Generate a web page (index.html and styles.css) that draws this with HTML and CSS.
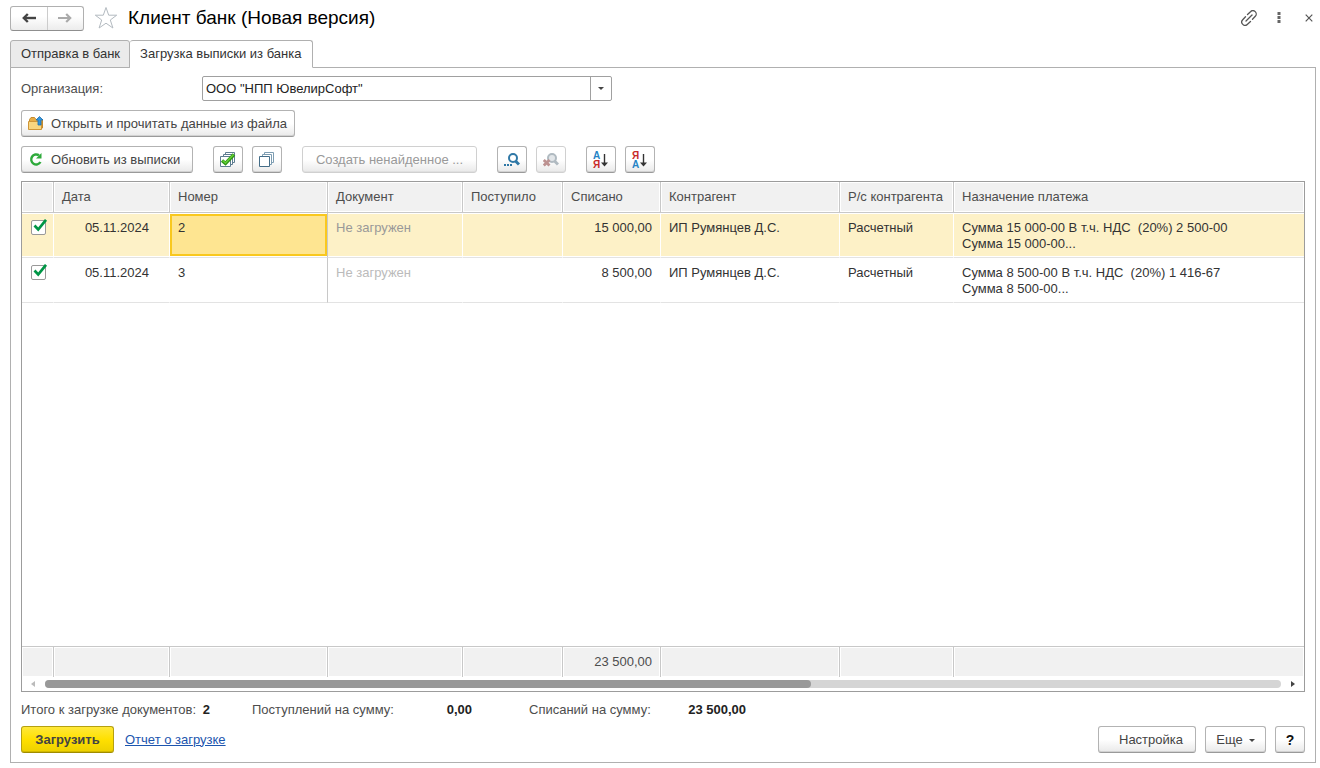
FILE: index.html
```html
<!DOCTYPE html>
<html lang="ru">
<head>
<meta charset="utf-8">
<title>Клиент банк (Новая версия)</title>
<link rel="stylesheet" href="styles.css">
</head>
<body>
<header class="titlebar">
  <div class="nav">
    <button class="nav-btn" type="button" aria-label="Назад"><svg width="14" height="10" viewBox="0 0 14 10"><path d="M2 5H14" stroke="#444" stroke-width="2.400"/><path d="M5.800 1L1.800 5L5.800 9" fill="none" stroke="#444" stroke-width="2.400"/></svg></button>
    <button class="nav-btn" type="button" aria-label="Вперед"><svg width="14" height="10" viewBox="0 0 14 10"><path d="M0 5H12" stroke="#aaa" stroke-width="2"/><path d="M8.200 1L12.200 5L8.200 9" fill="none" stroke="#aaa" stroke-width="2.200"/></svg></button>
  </div>
  <button class="plain" type="button" aria-label="В избранное"><svg width="24" height="24" viewBox="0 0 24 24"><path d="M12 1.500L14.700 9.200H22.700L16.300 14L18.900 22L12 17.200L5.100 22L7.700 14L1.300 9.200H9.300Z" fill="#fff" stroke="#b3bac0"/></svg></button>
  <h1>Клиент банк (Новая версия)</h1>
  <div class="window-tools">
    <button class="plain" type="button" aria-label="Ссылка"><svg width="16" height="16" viewBox="0 0 16 16"><g fill="none" stroke="#555" stroke-width="1.300" stroke-linecap="round"><path d="M6.500 4.500L9.500 1.700A3.200 3.200 0 0 1 14.300 6.300L11.500 9.200"/><path d="M9.500 11.500L6.500 14.300A3.200 3.200 0 0 1 1.700 9.700L4.500 6.800"/><path d="M5 11L11 5"/></g></svg></button>
    <button class="plain" type="button" aria-label="Меню"><svg width="4" height="12" viewBox="0 0 4 12"><path d="M.5 0h3v3h-3zM.5 4h3v3h-3zM.5 8h3v3h-3z" fill="#666"/></svg></button>
    <button class="plain" type="button" aria-label="Закрыть"><svg width="8" height="8" viewBox="0 0 8 8"><path d="M.7.7L7.300 7.300M7.300.7L.7 7.300" stroke="#555" stroke-width="1.200"/></svg></button>
  </div>
</header>

<nav class="tabs" role="tablist">
  <button class="tab" type="button" role="tab" aria-selected="false">Отправка в банк</button>
  <button class="tab active" type="button" role="tab" aria-selected="true">Загрузка выписки из банка</button>
</nav>

<main class="panel">
  <div class="field">
    <label for="org">Организация:</label>
    <div class="combo">
      <select id="org"><option>ООО "НПП ЮвелирСофт"</option></select>
      <span class="combo-arrow"><svg width="6" height="3" viewBox="0 0 6 3"><path d="M0 0H6L3 3Z" fill="#444"/></svg></span>
    </div>
  </div>

  <div class="toolbar">
    <button class="btn with-icon open" type="button"><svg width="17" height="16" viewBox="0 0 17 16"><path d="M1.500 12V3.500L3 1.500H6.500L8 3.500H14.500V12Z" fill="#e8ad45" stroke="#c68a2c"/><path d="M.5 13.500V5.500H13.500V13.500Z" fill="#f8d680" stroke="#cf9638"/><path d="M11.500 .5L15 4H13V9H10V4H8Z" fill="#3195dc" stroke="#1d6dac" stroke-width=".8"/></svg>Открыть и прочитать данные из файла</button>
  </div>

  <div class="toolbar">
    <button class="btn with-icon refresh" type="button"><svg width="17" height="16" viewBox="0 0 17 16"><path d="M12.500 10A5 5 0 1 1 11 3.300" fill="none" stroke="#2eaa3b" stroke-width="2.400"/><path d="M13.500 1V6.500H8Z" fill="#2eaa3b"/></svg>Обновить из выписки</button>
    <div class="group">
      <button class="btn icon" type="button" aria-label="Отметить все"><svg width="16" height="16" viewBox="0 0 16 16"><g fill="#fff" stroke="#5e7d91"><path d="M5.500.5h9v10h-9z"/><path d="M3.500 2.500h9v10h-9z"/><path d="M.5 4.500h10v10h-10z"/></g><path d="M2 8.500L5.500 11.500L14 2.500" fill="none" stroke="#2d9416" stroke-width="3.400"/><path d="M2.500 8.500L5.500 11L13.500 2.500" fill="none" stroke="#64cf35" stroke-width="1.600"/></svg></button>
      <button class="btn icon" type="button" aria-label="Снять отметки"><svg width="16" height="16" viewBox="0 0 16 16"><g fill="#fff" stroke="#7d9db2"><path d="M5.500.5h9v10h-9z"/><path d="M3.500 2.500h9v10h-9z"/><path d="M.5 4.500h10v10h-10z" stroke="#456d88"/></g></svg></button>
    </div>
    <button class="btn create" type="button" disabled>Создать ненайденное ...</button>
    <div class="group">
      <button class="btn icon" type="button" aria-label="Найти"><svg width="16" height="16" viewBox="0 0 16 16"><circle cx="9" cy="6" r="4" fill="none" stroke="#2f78a6" stroke-width="2"/><path d="M11.500 9L15 12.500" stroke="#2f78a6" stroke-width="3"/><path d="M0 12h2v2H0zM3 12h2v2H3zM6 12h2v2H6z" fill="#2f78a6"/></svg></button>
      <button class="btn icon" type="button" disabled aria-label="Отменить поиск"><svg width="16" height="16" viewBox="0 0 16 16"><circle cx="9" cy="6" r="4" fill="#e2e6e9" stroke="#b0bac1" stroke-width="2"/><path d="M11.500 9L15 12.500" stroke="#b0bac1" stroke-width="3"/><path d="M.8 8L6.500 13.500M6.500 8L.8 13.500" stroke="#bd9291" stroke-width="2.800"/></svg></button>
    </div>
    <div class="group">
      <button class="btn icon" type="button" aria-label="По возрастанию"><svg class="sort" width="16" height="18" viewBox="0 0 16 18"><text x="0" y="8" fill="#2684c6">А</text><text x="0" y="17" fill="#c82a2a">Я</text><path d="M11.500 3V14" stroke="#333" stroke-width="1.400"/><path d="M8 11.500H15L11.500 15.500Z" fill="#333"/></svg></button>
      <button class="btn icon" type="button" aria-label="По убыванию"><svg class="sort" width="16" height="18" viewBox="0 0 16 18"><text x="0" y="8" fill="#c82a2a">Я</text><text x="0" y="17" fill="#2684c6">А</text><path d="M11.500 3V14" stroke="#333" stroke-width="1.400"/><path d="M8 11.500H15L11.500 15.500Z" fill="#333"/></svg></button>
    </div>
  </div>

  <section class="grid">
    <div class="grid-body">
      <table>
        <colgroup><col class="c-check"><col class="c-date"><col class="c-num"><col class="c-doc"><col class="c-in"><col class="c-out"><col class="c-party"><col class="c-acc"><col></colgroup>
        <thead><tr><th></th><th>Дата</th><th>Номер</th><th>Документ</th><th>Поступило</th><th>Списано</th><th>Контрагент</th><th>Р/с контрагента</th><th>Назначение платежа</th></tr></thead>
        <tbody>
          <tr class="row selected"><td class="check"><input type="checkbox" checked aria-label="Загружать документ 2"></td><td class="date">05.11.2024</td><td class="num current">2</td><td class="muted">Не загружен</td><td></td><td class="sum">15 000,00</td><td>ИП Румянцев Д.С.</td><td>Расчетный</td><td class="purpose">Сумма 15 000-00 В т.ч. НДС  (20%) 2 500-00
Сумма 15 000-00...</td></tr>
          <tr class="row"><td class="check"><input type="checkbox" checked aria-label="Загружать документ 3"></td><td class="date">05.11.2024</td><td class="num">3</td><td class="muted">Не загружен</td><td></td><td class="sum">8 500,00</td><td>ИП Румянцев Д.С.</td><td>Расчетный</td><td class="purpose">Сумма 8 500-00 В т.ч. НДС  (20%) 1 416-67
Сумма 8 500-00...</td></tr>
          <tr class="filler"><td colspan="9"></td></tr>
        </tbody>
        <tfoot><tr><td></td><td></td><td></td><td></td><td></td><td class="sum">23 500,00</td><td></td><td></td><td></td></tr></tfoot>
      </table>
    </div>
    <div class="scroll">
      <svg width="4" height="6" viewBox="0 0 4 6"><path d="M4 0V6L0 3Z" fill="#bbb"/></svg>
      <div class="track"><div class="thumb"></div></div>
      <svg width="4" height="6" viewBox="0 0 4 6"><path d="M0 0V6L4 3Z" fill="#444"/></svg>
    </div>
  </section>

  <div class="totals">
    <div class="total docs"><span>Итого к загрузке документов:</span><b>2</b></div>
    <div class="total incoming"><span>Поступлений на сумму:</span><b>0,00</b></div>
    <div class="total"><span>Списаний на сумму:</span><b>23 500,00</b></div>
  </div>

  <footer class="actions">
    <button class="btn primary" type="button">Загрузить</button>
    <a href="#report">Отчет о загрузке</a>
    <div class="right">
      <button class="btn settings" type="button">Настройка</button>
      <button class="btn more" type="button">Еще<svg width="6" height="3" viewBox="0 0 6 3"><path d="M0 0H6L3 3Z" fill="#444"/></svg></button>
      <button class="btn help" type="button">?</button>
    </div>
  </footer>
</main>
</body>
</html>
```
FILE: styles.css
```css
* { box-sizing: border-box; }
body {
  margin: 0;
  min-height: 100vh;
  padding: 0 4px 5px 10px;
  display: flex;
  flex-direction: column;
  background: #fff;
  color: #333;
  font: 13px/16px "Liberation Sans", Arial, sans-serif;
}
button, select { font: inherit; color: inherit; }
button { padding: 0; }
svg { display: block; flex: none; }

.titlebar { display: flex; align-items: center; height: 40px; padding-bottom: 4px; }
.nav {
  display: flex;
  width: 74px;
  height: 25px;
  border: 1px solid #b0b0b0;
  border-bottom-color: #8f8f8f;
  border-radius: 3px;
  background: linear-gradient(#fff 40%, #ececec);
}
.nav-btn { flex: 1; display: grid; place-items: center; border: 0; background: none; }
.nav-btn + .nav-btn { border-left: 1px solid #ccc; }
.plain { border: 0; background: none; }
.nav + .plain { margin: 0 10px; }
h1 { margin: 0; font-size: 19px; line-height: 26px; font-weight: 400; color: #000; }
.window-tools { margin-left: auto; display: flex; align-items: center; gap: 20px; padding-right: 3px; }
.window-tools .plain:last-child { margin-left: 4px; }

.tabs { display: flex; height: 28px; margin-bottom: -1px; z-index: 1; }
.tab {
  padding: 0 10px;
  border: 1px solid #b0b0b0;
  border-radius: 3px 3px 0 0;
  background: #ebebeb;
}
.tab:first-child { padding-right: 9px; }
.tab.active { padding-right: 11px; border-left: 0; border-bottom-color: #fff; background: #fff; }

.panel {
  flex: 1;
  display: flex;
  flex-direction: column;
  padding: 8px 10px 9px;
  border: 1px solid #b0b0b0;
}
.field { display: flex; align-items: center; color: #4d4d4d; }
.field label { width: 181px; }
.combo { position: relative; width: 410px; height: 25px; }
.combo select {
  appearance: none;
  width: 100%;
  height: 100%;
  padding: 0 24px 0 3px;
  border: 1px solid #a0a0a0;
  border-radius: 2px;
  background: #fff;
  color: #222;
}
.combo-arrow {
  position: absolute;
  inset: 1px 1px 1px auto;
  width: 21px;
  display: grid;
  place-items: center;
  border-left: 1px solid #a0a0a0;
  pointer-events: none;
}

.toolbar { display: flex; gap: 20px; margin-top: 9px; }
.group { display: flex; gap: 9px; }
.btn {
  height: 27px;
  padding-top: 1px;
  border: 1px solid #b3b3b3;
  border-bottom-color: #9a9a9a;
  border-radius: 3px;
  background: linear-gradient(#fff 50%, #e9e9e9);
  box-shadow: inset 0 -1px #d2d2d2;
  color: #444;
}
.btn:disabled { border-color: #d0d0d0; box-shadow: inset 0 -1px #e0e0e0; color: #999; }
.with-icon { display: flex; align-items: center; gap: 6px; padding: 1px 6px 0; }
.open { min-width: 274px; }
.refresh { min-width: 172px; }
.icon { width: 30px; display: grid; place-items: center; padding: 0; }
.create { min-width: 175px; }
.sort { font: bold 10px "Liberation Sans", Arial, sans-serif; }

.grid {
  flex: 1;
  display: flex;
  flex-direction: column;
  margin-top: 8px;
  border: 1px solid #9c9c9c;
}
.grid-body { flex: 1; display: grid; }
table { width: 100%; height: 100%; table-layout: fixed; border-collapse: separate; border-spacing: 0; }
.c-check { width: 32px; }
.c-date { width: 116px; }
.c-num { width: 158px; }
.c-doc { width: 135px; }
.c-in { width: 100px; }
.c-out { width: 98px; }
.c-party { width: 179px; }
.c-acc { width: 114px; }
th, td { padding: 7px 8px 5px; text-align: left; vertical-align: top; }
th, tfoot td {
  height: 31px;
  border-right: 1px solid #c8c8c8;
  background: #f1f1f1;
  box-shadow: inset 0 0 0 1px #fff;
  font-weight: 400;
  color: #4d4d4d;
  white-space: nowrap;
}
th { border-bottom: 1px solid #c8c8c8; }
tfoot td { border-top: 1px solid #c8c8c8; }
th:last-child, tfoot td:last-child, .row td:last-child { border-right: 0; }
.row td { height: 45px; border-right: 1px solid #fff; border-bottom: 1px solid #e3e3e3; }
.row .num { border-right-color: #c8c8c8; }
.selected td { background: #fdf1c7; box-shadow: inset 0 1px #fff, inset 0 -1px #fff; }
.selected .current { background: #fee591; box-shadow: inset 0 1px #fff, inset 0 -1px #fff, inset 0 3px #f9c81e, inset 0 -3px #f9c81e, inset 2px 0 #f9c81e, inset -2px 0 #f9c81e; }
.row .date { padding-right: 20px; text-align: right; }
td.sum { text-align: right; }
.muted { color: #bbb; }
.selected .muted { color: #999; }
.purpose { white-space: pre-wrap; }
.filler td { padding: 0; }
.row .check { padding: 6px 0 0 9px; }
.check input {
  appearance: none;
  display: block;
  width: 17px;
  height: 17px;
  margin: 0;
  background: url("data:image/svg+xml,%3Csvg xmlns='http://www.w3.org/2000/svg' viewBox='0 0 17 17'%3E%3Crect x='.5' y='1.5' width='14' height='14' rx='1.5' fill='%23fff' stroke='%23999'/%3E%3Cpath d='M3.500 6.500L7.200 10.500L15 .8' fill='none' stroke='%23009646' stroke-width='2.700'/%3E%3C/svg%3E");
}

.scroll { display: flex; align-items: center; gap: 10px; height: 14px; padding: 0 9px; }
.track { flex: 1; height: 8px; border-radius: 4px; background: #d5d5d5; }
.thumb { width: 62%; height: 8px; border-radius: 4px; background: #999; }

.totals { display: flex; margin-top: 10px; color: #4d4d4d; }
.total { display: flex; justify-content: space-between; width: 217px; }
.total b { color: #222; }
.docs { width: 189px; margin-right: 42px; }
.incoming { width: 220px; margin-right: 57px; }

.actions { display: flex; align-items: center; margin-top: 8px; }
.primary {
  width: 93px;
  border-color: #b5a010;
  border-bottom-color: #a08c00;
  background: linear-gradient(#ffe83a, #ffe000 50%, #ecd000);
  box-shadow: inset 0 -1px #d2b900;
  font-weight: 700;
}
a { margin-left: 11px; color: #1c55ae; text-decoration: underline; }
.right { margin-left: auto; display: flex; gap: 9px; }
.settings { width: 98px; padding-left: 8px; }
.more { width: 61px; display: flex; align-items: center; justify-content: center; gap: 6px; }
.help { width: 30px; font-size: 14px; font-weight: 700; color: #111; }
```
